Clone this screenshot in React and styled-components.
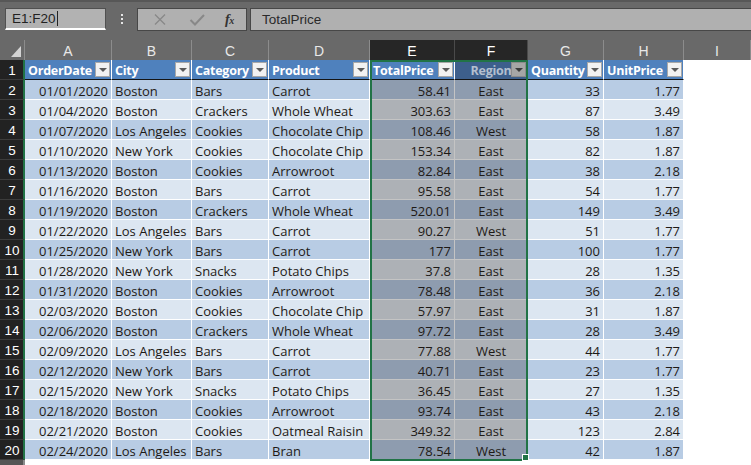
import React from 'react';
import styled, {createGlobalStyle} from 'styled-components';

const green = '#217346';
const cellFont = `'Open Sans', 'Liberation Sans', sans-serif`;
const uiFont = `'Liberation Sans', 'DejaVu Sans', sans-serif`;

const ROW_HEADER = 25;

const columns = [
  {key: 'A', width: 87, title: 'OrderDate', align: 'right'},
  {key: 'B', width: 80, title: 'City', align: 'left'},
  {key: 'C', width: 77, title: 'Category', align: 'left'},
  {key: 'D', width: 101, title: 'Product', align: 'left'},
  {key: 'E', width: 85, title: 'TotalPrice', align: 'right'},
  {key: 'F', width: 73, title: 'Region', align: 'center'},
  {key: 'G', width: 76, title: 'Quantity', align: 'right'},
  {key: 'H', width: 80, title: 'UnitPrice', align: 'right'},
];

const selectedCols = new Set(['E', 'F']);

const rows = [
  ['01/01/2020', 'Boston', 'Bars', 'Carrot', '58.41', 'East', '33', '1.77'],
  ['01/04/2020', 'Boston', 'Crackers', 'Whole Wheat', '303.63', 'East', '87', '3.49'],
  ['01/07/2020', 'Los Angeles', 'Cookies', 'Chocolate Chip', '108.46', 'West', '58', '1.87'],
  ['01/10/2020', 'New York', 'Cookies', 'Chocolate Chip', '153.34', 'East', '82', '1.87'],
  ['01/13/2020', 'Boston', 'Cookies', 'Arrowroot', '82.84', 'East', '38', '2.18'],
  ['01/16/2020', 'Boston', 'Bars', 'Carrot', '95.58', 'East', '54', '1.77'],
  ['01/19/2020', 'Boston', 'Crackers', 'Whole Wheat', '520.01', 'East', '149', '3.49'],
  ['01/22/2020', 'Los Angeles', 'Bars', 'Carrot', '90.27', 'West', '51', '1.77'],
  ['01/25/2020', 'New York', 'Bars', 'Carrot', '177', 'East', '100', '1.77'],
  ['01/28/2020', 'New York', 'Snacks', 'Potato Chips', '37.8', 'East', '28', '1.35'],
  ['01/31/2020', 'Boston', 'Cookies', 'Arrowroot', '78.48', 'East', '36', '2.18'],
  ['02/03/2020', 'Boston', 'Cookies', 'Chocolate Chip', '57.97', 'East', '31', '1.87'],
  ['02/06/2020', 'Boston', 'Crackers', 'Whole Wheat', '97.72', 'East', '28', '3.49'],
  ['02/09/2020', 'Los Angeles', 'Bars', 'Carrot', '77.88', 'West', '44', '1.77'],
  ['02/12/2020', 'New York', 'Bars', 'Carrot', '40.71', 'East', '23', '1.77'],
  ['02/15/2020', 'New York', 'Snacks', 'Potato Chips', '36.45', 'East', '27', '1.35'],
  ['02/18/2020', 'Boston', 'Cookies', 'Arrowroot', '93.74', 'East', '43', '2.18'],
  ['02/21/2020', 'Boston', 'Cookies', 'Oatmeal Raisin', '349.32', 'East', '123', '2.84'],
  ['02/24/2020', 'Los Angeles', 'Bars', 'Bran', '78.54', 'West', '42', '1.87'],
];

const GlobalStyle = createGlobalStyle`
  html, body {
    margin: 0;
    padding: 0;
    background: #696969;
    overflow: hidden;
  }
  * { box-sizing: border-box; }
`;

const Window = styled.div`
  width: 751px;
  height: 465px;
  overflow: hidden;
  background: #696969;
`;

/* ---------- formula bar ---------- */

const FormulaBar = styled.div`
  display: flex;
  align-items: flex-start;
  height: 40px;
  padding-top: 6px;
  border-top: 2px solid #575757;
  font-family: ${uiFont};
`;

const NameBox = styled.div`
  margin-left: 5px;
  width: 101px;
  height: 22px;
  background: #b2b2b2;
  border: 1px solid #505050;
  border-bottom: 2px solid #ffffff;
  display: flex;
  align-items: center;
  padding-left: 6px;
  font-size: 13.5px;
  color: #222;
`;

const Caret = styled.span`
  display: inline-block;
  width: 1px;
  height: 15px;
  background: #222;
  margin-left: 1px;
`;

const Grip = styled.div`
  width: 31px;
  height: 23px;
  display: flex;
  align-items: center;
  justify-content: center;
`;

const ButtonGroup = styled.div`
  display: flex;
  align-items: center;
  width: 110px;
  height: 23px;
  background: #b0b0b0;
  border: 1px solid #474747;
  padding-left: 12px;
  gap: 17px;
`;

const FxLabel = styled.span`
  font-family: 'Liberation Serif', serif;
  font-style: italic;
  font-weight: bold;
  font-size: 14px;
  color: #333;
  margin-left: 1px;
  letter-spacing: -0.5px;

  & sub {
    font-size: 10px;
    vertical-align: 0;
  }
`;

const FormulaInput = styled.div`
  flex: 1;
  margin-left: 3px;
  height: 23px;
  background: #b0b0b0;
  border: 1px solid #474747;
  border-right: none;
  display: flex;
  align-items: center;
  padding-left: 11px;
  font-size: 13.5px;
  color: #2a2a2a;
`;

const CrossIcon = () => (
  <svg width="20" height="18" viewBox="0 0 20 18">
    <path d="M5 3.5 L15 13.5 M15 3.5 L5 13.5" stroke="#888888" strokeWidth="1.3" fill="none" />
  </svg>
);

const CheckIcon = () => (
  <svg width="20" height="18" viewBox="0 0 20 18">
    <path d="M3.5 9 L8 13.5 L17 4" stroke="#888888" strokeWidth="2" fill="none" />
  </svg>
);

const GripIcon = () => (
  <svg width="4" height="12" viewBox="0 0 4 12">
    <rect x="1" y="0" width="2" height="2" fill="#e6e6e6" />
    <rect x="1" y="4" width="2" height="2" fill="#e6e6e6" />
    <rect x="1" y="8" width="2" height="2" fill="#e6e6e6" />
  </svg>
);

/* ---------- sheet ---------- */

const Sheet = styled.div`
  display: flex;
  flex-direction: column;
`;

const Row = styled.div`
  display: flex;
  height: 20px;
  flex-shrink: 0;
`;

const Corner = styled.div`
  width: ${ROW_HEADER}px;
  height: 20px;
  border-right: 1px solid #8c8c8c;
  display: flex;
  align-items: flex-end;
  justify-content: flex-end;
  padding: 0 3px 3px 0;
`;

const ColHeader = styled.div`
  width: ${({$width}) => ($width ? `${$width}px` : 'auto')};
  flex: ${({$width}) => ($width ? '0 0 auto' : '1')};
  height: 20px;
  border-right: 1px solid ${({$selected}) => ($selected ? '#4a4a4a' : '#8c8c8c')};
  background: ${({$selected}) => ($selected ? '#262626' : '#696969')};
  color: ${({$selected}) => ($selected ? '#ffffff' : '#e8e8e8')};
  font-family: ${uiFont};
  font-size: 14px;
  line-height: 23px;
  text-align: center;
`;

const RowHeader = styled.div`
  width: ${ROW_HEADER}px;
  flex-shrink: 0;
  height: 20px;
  background: ${({$selected}) => ($selected ? '#222222' : '#555555')};
  border-right: 2px solid ${({$selected}) => ($selected ? green : '#8c8c8c')};
  border-bottom: 1px solid #3c3c3c;
  color: #ffffff;
  font-family: ${uiFont};
  font-size: 13.5px;
  line-height: 22px;
  text-align: center;
  padding-left: 1px;
  overflow: hidden;
`;

const bandColor = ({$band, $selected}) => {
  if ($band === 'dark') return $selected ? '#8e9caf' : '#b8cce4';
  if ($band === 'light') return $selected ? '#adb1b6' : '#dce6f1';
  return '#ffffff';
};

const Cell = styled.div`
  width: ${({$width}) => ($width ? `${$width}px` : 'auto')};
  flex: ${({$width}) => ($width ? '0 0 auto' : '1')};
  height: 20px;
  background: ${bandColor};
  border-right: 1px solid ${({$selected}) => ($selected ? '#c4c4c4' : '#ffffff')};
  border-bottom: 1px solid ${({$selected}) => ($selected ? '#c4c4c4' : '#ffffff')};
  padding: 0 3px;
  text-align: ${({$align}) => $align};
  white-space: nowrap;
  overflow: hidden;
  font-family: ${cellFont};
  font-size: 13px;
  line-height: 22px;
  color: #1e1a16;
`;

const HeadCell = styled.div`
  position: relative;
  width: ${({$width}) => $width}px;
  flex: 0 0 auto;
  height: 20px;
  background: ${({$selected}) => ($selected ? '#3d5f8c' : '#4f81bd')};
  border-right: 1px solid ${({$selected}) => ($selected ? '#c4c4c4' : '#ffffff')};
  border-bottom: 1px solid #141414;
  padding: 0 3px;
  text-align: ${({$align}) => ($align === 'center' ? 'center' : 'left')};
  white-space: nowrap;
  overflow: hidden;
  font-family: ${cellFont};
  font-weight: 700;
  font-size: 12.5px;
  letter-spacing: -0.25px;
  line-height: 21px;
  color: ${({$selected}) => ($selected ? '#b3bfcf' : '#ffffff')};
`;

const FilterButton = styled.div`
  position: absolute;
  right: 1px;
  top: 2px;
  width: 15px;
  height: 15px;
  background: ${({$selected}) => ($selected ? '#a6a6a6' : '#f2f2f2')};
  border: 1px solid ${({$selected}) => ($selected ? '#8c8c8c' : '#a8a8a8')};
  display: flex;
  align-items: center;
  justify-content: center;

  &::after {
    content: '';
    border-left: 4px solid transparent;
    border-right: 4px solid transparent;
    border-top: 4px solid ${({$selected}) => ($selected ? '#3c3c3c' : '#5a5a5a')};
  }
`;

const Body = styled.div`
  position: relative;
`;

const Selection = styled.div`
  position: absolute;
  border: 2px solid ${green};
  pointer-events: none;
`;

const FillHandle = styled.div`
  position: absolute;
  left: calc(100% - 4px);
  top: calc(100% - 5px);
  width: 7px;
  height: 7px;
  background: ${green};
  border: 1px solid #ffffff;
`;

const selLeft =
  ROW_HEADER +
  columns.filter((c) => c.key < 'E').reduce((s, c) => s + c.width, 0);
const selWidth = columns
  .filter((c) => selectedCols.has(c.key))
  .reduce((s, c) => s + c.width, 0);

export default function App() {
  return (
    <Window>
      <GlobalStyle />
      <FormulaBar>
        <NameBox>
          E1:F20
          <Caret />
        </NameBox>
        <Grip>
          <GripIcon />
        </Grip>
        <ButtonGroup>
          <CrossIcon />
          <CheckIcon />
          <FxLabel>
            f<sub>x</sub>
          </FxLabel>
        </ButtonGroup>
        <FormulaInput>TotalPrice</FormulaInput>
      </FormulaBar>

      <Sheet>
        <Row>
          <Corner>
            <svg width="10" height="11" viewBox="0 0 10 11">
              <polygon points="10,0 10,11 0,11" fill="#d4d4d4" />
            </svg>
          </Corner>
          {columns.map((c) => (
            <ColHeader key={c.key} $width={c.width} $selected={selectedCols.has(c.key)}>
              {c.key}
            </ColHeader>
          ))}
          <ColHeader>I</ColHeader>
        </Row>

        <Body>
          <Row>
            <RowHeader $selected>1</RowHeader>
            {columns.map((c) => (
              <HeadCell
                key={c.key}
                $width={c.width}
                $align={c.align}
                $selected={c.key === 'F'}
              >
                {c.title}
                <FilterButton $selected={c.key === 'F'} />
              </HeadCell>
            ))}
            <Cell />
          </Row>

          {rows.map((r, i) => (
            <Row key={i}>
              <RowHeader $selected>{i + 2}</RowHeader>
              {columns.map((c, j) => (
                <Cell
                  key={c.key}
                  $width={c.width}
                  $align={c.align}
                  $band={i % 2 === 0 ? 'dark' : 'light'}
                  $selected={selectedCols.has(c.key)}
                >
                  {r[j]}
                </Cell>
              ))}
              <Cell />
            </Row>
          ))}

          <Row>
            <RowHeader />
            {columns.map((c) => (
              <Cell key={c.key} $width={c.width} />
            ))}
            <Cell />
          </Row>

          <Selection
            style={{left: selLeft, top: 0, width: selWidth, height: 20 * 20 + 1}}
          >
            <FillHandle />
          </Selection>
        </Body>
      </Sheet>
    </Window>
  );
}
